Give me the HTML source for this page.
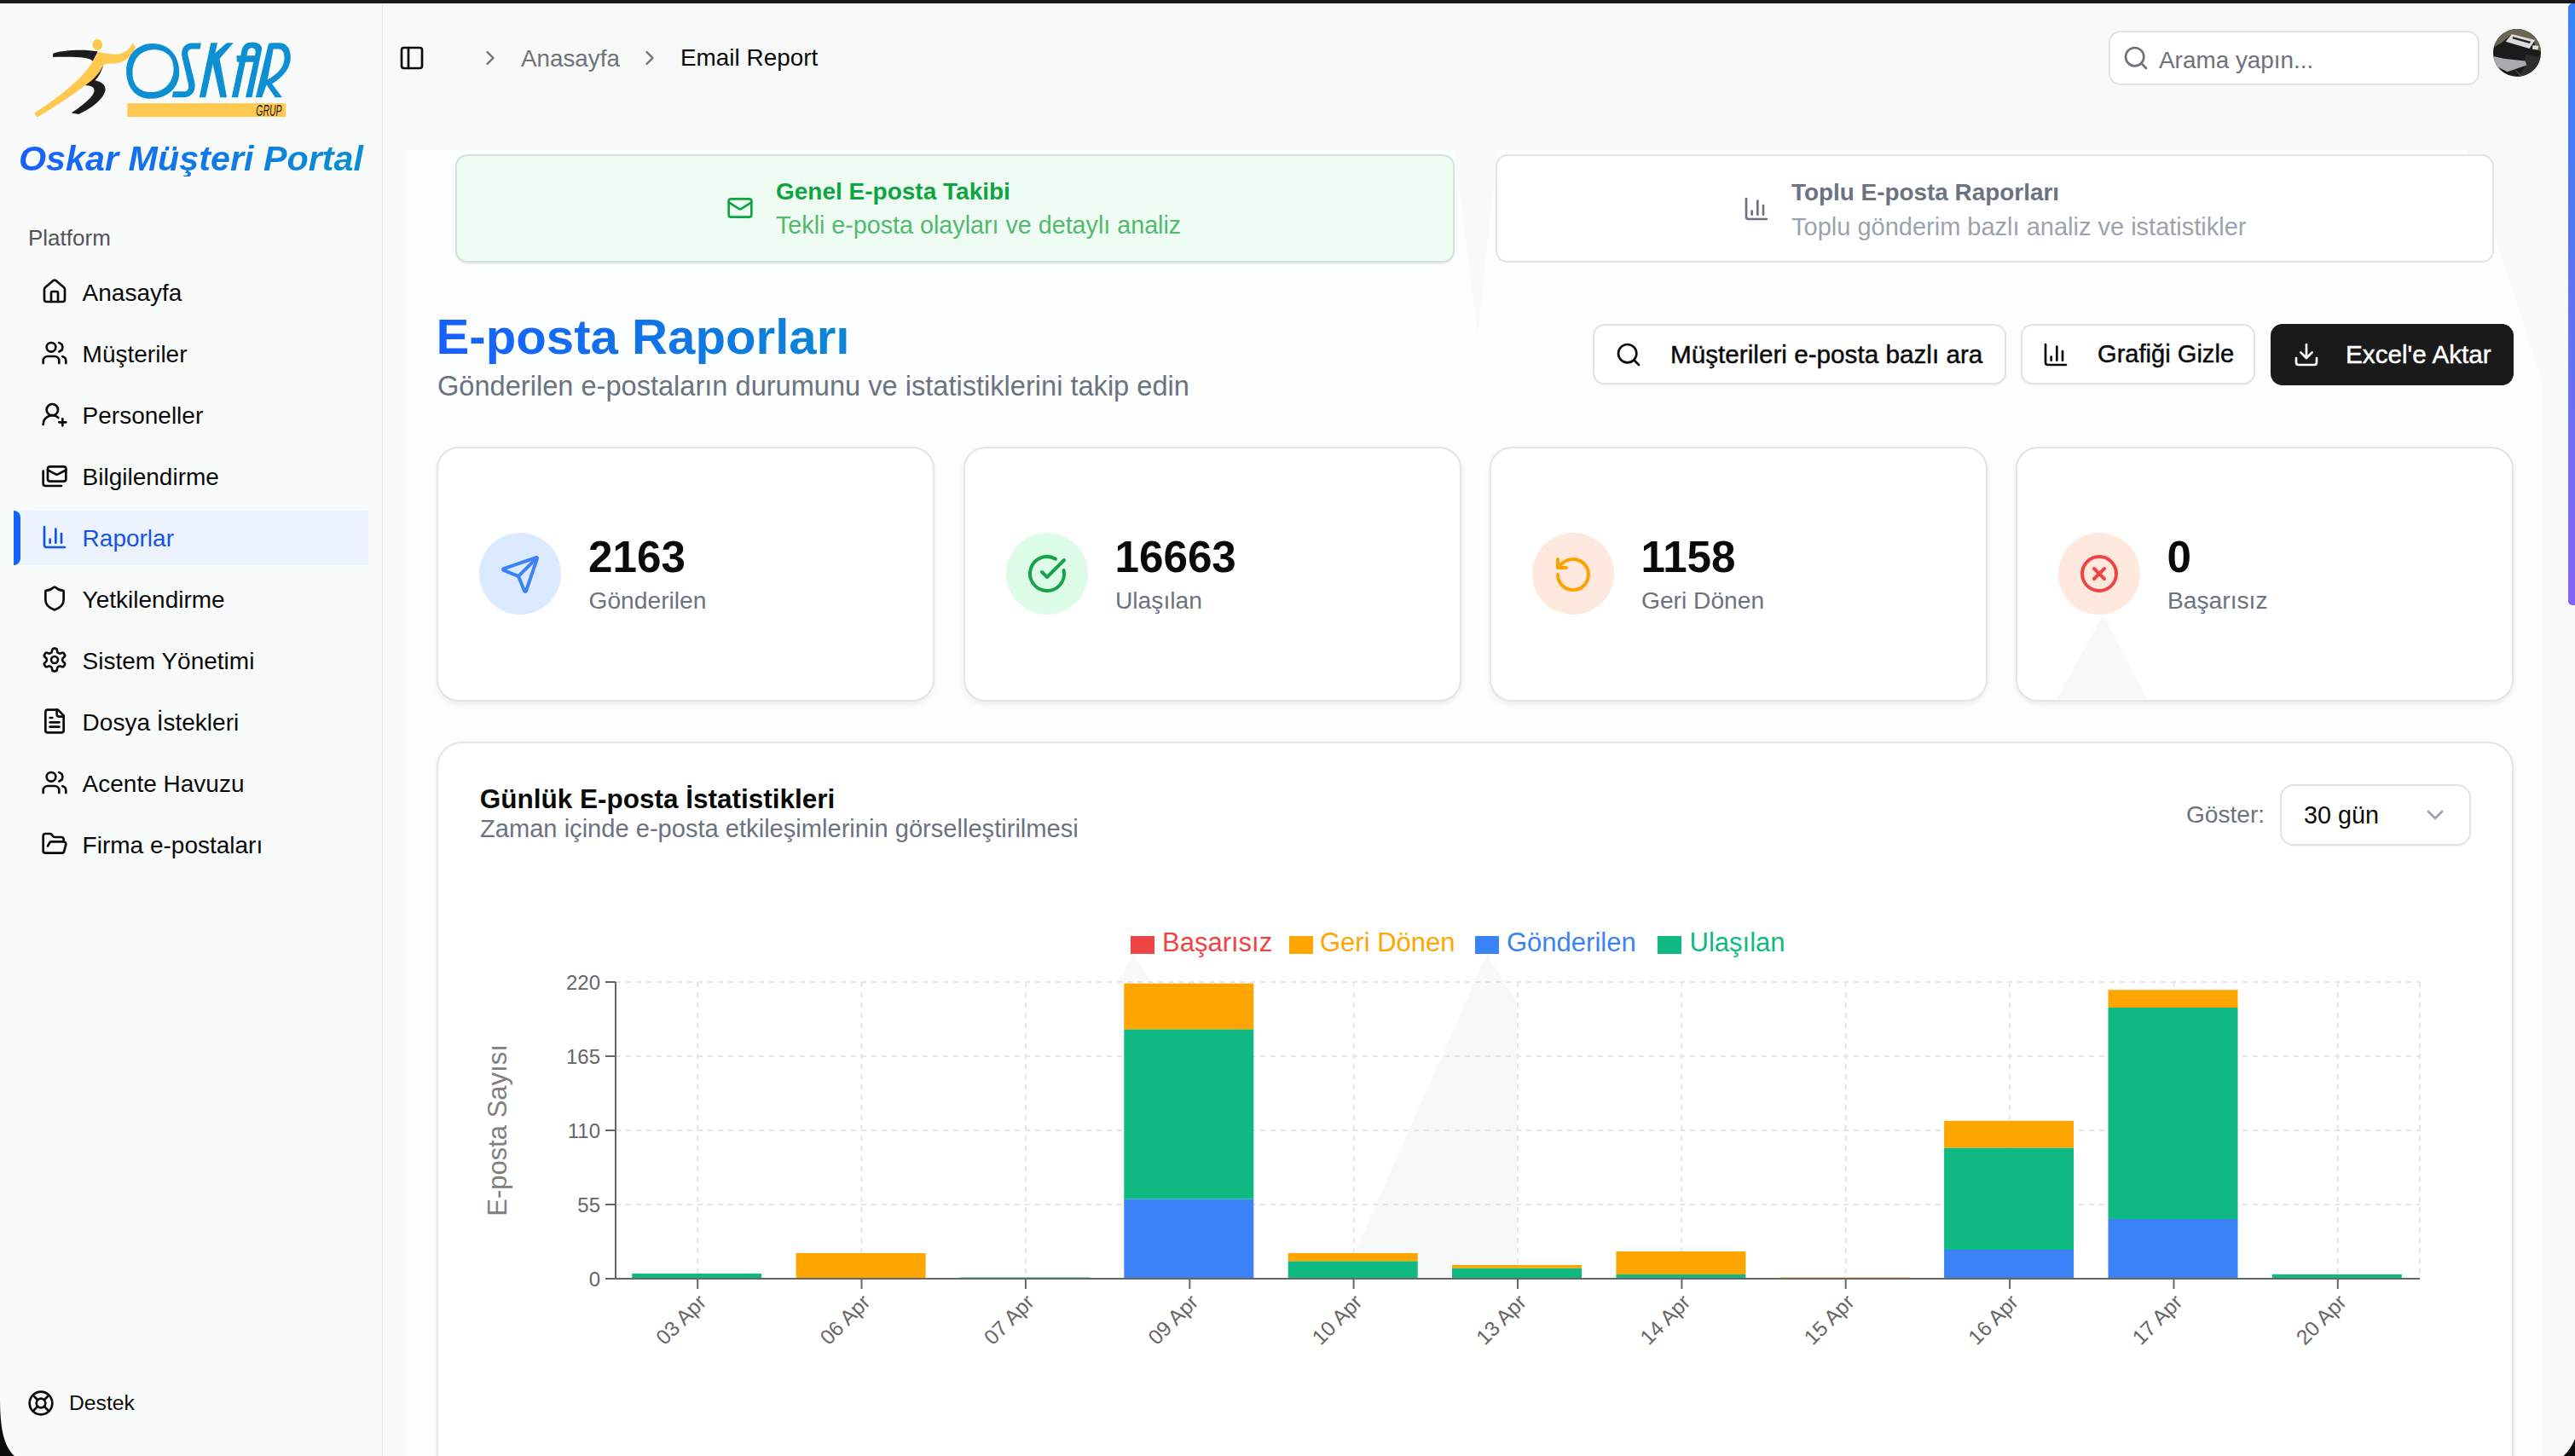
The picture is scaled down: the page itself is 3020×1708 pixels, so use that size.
<!DOCTYPE html>
<html><head><meta charset="utf-8">
<style>
*{box-sizing:border-box;margin:0;padding:0}
html,body{width:3020px;height:1708px;overflow:hidden;background:#f8fafa;font-family:"Liberation Sans",sans-serif;position:relative}
.t{position:absolute;white-space:nowrap;line-height:1}
.ic{position:absolute;overflow:visible}
.box{position:absolute}
</style></head><body>

<div class="box" style="left:0;top:0;width:3020px;height:4px;background:#1a1a1a"></div>
<div class="box" style="left:0;top:4px;width:3020px;height:1px;background:#fff"></div>
<svg class="ic" style="left:0;top:0;width:3020px;height:1708px" viewBox="0 0 3020 1708"><path d="M476 176 L1706 176 L1733 392 L1756 176 L2893 176 L2981 446 L2981 1708 L476 1708 Z" fill="#fcfdfd"/></svg>
<div class="box" style="left:0;top:5px;width:449px;height:1703px;background:#f9fafa;border-right:1px solid #e6e7e7"></div>
<svg class="ic" style="left:30px;top:35px;width:320px;height:110px" viewBox="0 0 2575 885">
<g transform="translate(48.3,40.2) scale(0.5527)">
<path fill="#1c1c1c" d="M380 330 C600 262 950 262 1145 300 L1060 462 C1000 392 800 385 380 392 Z"/>
<path fill="#1c1c1c" d="M1250 500 C1220 620 1170 720 1100 790 C1200 815 1275 860 1275 940 C1275 1080 1050 1270 820 1368 L695 1345 C900 1210 1085 1060 1085 960 C1085 900 1020 878 930 874 L1000 700 Z"/>
<path fill="#ffc94f" d="M60 1350 C400 1130 800 830 1000 560 C1060 470 1110 380 1150 305 C1250 320 1350 345 1480 350 L1480 500 C1380 510 1300 505 1250 520 C1150 720 1000 830 930 872 C700 1050 400 1250 110 1420 Z"/>
<ellipse fill="#ffc94f" cx="1140" cy="180" rx="85" ry="95"/>
</g>
<path fill="#ffc94f" d="M850 232 C920 228 985 190 1010 122 L1038 160 C1010 250 930 305 850 318 Z"/>
<g transform="translate(-241.41,-281.645) scale(8.047)"><g transform="translate(140,40) scale(0.08157)">
<g fill="#0d8fd3">
<path fill-rule="evenodd" d="M480 135 C720 135 862 320 862 545 C862 770 690 930 450 930 C230 930 100 760 100 530 C100 300 260 135 480 135 Z M500 225 C300 225 190 370 190 560 C190 730 290 835 460 835 C650 835 780 690 780 500 C780 330 670 225 500 225 Z"/>
<path d="M1175 130 L1160 215 L1045 215 C990 215 975 260 990 320 L1080 680 C1110 820 1040 910 920 910 L760 910 L772 825 L925 825 C985 825 1005 780 990 710 L905 350 C870 215 940 130 1050 130 Z"/>
<path d="M1315 125 L1410 125 L1240 910 L1150 910 Z"/>
<path d="M1345 300 L1545 125 L1640 125 L1440 355 L1330 400 Z"/>
<path d="M1335 395 L1440 350 L1545 910 L1450 910 Z"/>
<path fill-rule="evenodd" d="M1615 910 L1760 230 C1780 150 1830 115 1910 115 C2000 115 2062 160 2047 230 L1905 910 L1815 910 L1955 280 C1965 230 1945 200 1905 200 C1870 200 1850 220 1840 270 L1705 910 Z"/>
<path d="M1685 310 L1985 310 L1968 400 L1690 400 Z"/>
<path fill-rule="evenodd" d="M1960 910 L2140 155 C2145 135 2165 125 2195 125 L2290 125 C2400 125 2462 200 2462 330 C2462 490 2360 610 2195 715 L2340 910 L2240 910 L2115 730 L2050 910 Z M2215 215 L2285 215 C2345 215 2372 265 2372 340 C2372 460 2300 560 2130 655 Z"/>
</g>
<rect x="115" y="995" width="2280" height="195" fill="#ffc94f"/>
<text x="1965" y="1175" font-family="Liberation Sans" font-style="italic" font-size="222" fill="#1a1a1a" textLength="370" lengthAdjust="spacingAndGlyphs">GRUP</text>
</g></g>
</svg>

<div class="t" style="left:22px;top:166.0px;font-size:41.3px;color:transparent;font-weight:bold;font-style:italic;background:linear-gradient(90deg,#1760ff,#0a8fd0);-webkit-background-clip:text;background-clip:text;padding-right:4px">Oskar Müşteri Portal</div>
<div class="t" style="left:33px;top:266.2px;font-size:26px;color:#52525b;font-weight:normal">Platform</div>
<div class="box" style="left:16px;top:599px;width:416px;height:64px;background:#edf3fe;border-radius:0"></div>
<div class="box" style="left:16px;top:599px;width:8px;height:64px;background:#1562f8;border-radius:0 8px 8px 0"></div>
<svg class="ic" style="left:48px;top:326px;width:32px;height:32px" viewBox="0 0 24 24" fill="none" stroke="#0a0a0a" stroke-width="2" stroke-linecap="round" stroke-linejoin="round"><path d="M15 21v-8a1 1 0 0 0-1-1h-4a1 1 0 0 0-1 1v8"/><path d="M3 10a2 2 0 0 1 .709-1.528l7-5.999a2 2 0 0 1 2.582 0l7 5.999A2 2 0 0 1 21 10v9a2 2 0 0 1-2 2H5a2 2 0 0 1-2-2z"/></svg>
<div class="t" style="left:96.6px;top:330.1px;font-size:28px;color:#0a0a0a;font-weight:normal">Anasayfa</div>
<svg class="ic" style="left:48px;top:398px;width:32px;height:32px" viewBox="0 0 24 24" fill="none" stroke="#0a0a0a" stroke-width="2" stroke-linecap="round" stroke-linejoin="round"><path d="M16 21v-2a4 4 0 0 0-4-4H6a4 4 0 0 0-4 4v2"/><circle cx="9" cy="7" r="4"/><path d="M22 21v-2a4 4 0 0 0-3-3.87"/><path d="M16 3.13a4 4 0 0 1 0 7.75"/></svg>
<div class="t" style="left:96.6px;top:402.1px;font-size:28px;color:#0a0a0a;font-weight:normal">Müşteriler</div>
<svg class="ic" style="left:48px;top:470px;width:32px;height:32px" viewBox="0 0 24 24" fill="none" stroke="#0a0a0a" stroke-width="2" stroke-linecap="round" stroke-linejoin="round"><path d="M2 21a8 8 0 0 1 13.292-6"/><circle cx="10" cy="8" r="5"/><path d="M19 16v6"/><path d="M22 19h-6"/></svg>
<div class="t" style="left:96.6px;top:474.1px;font-size:28px;color:#0a0a0a;font-weight:normal">Personeller</div>
<svg class="ic" style="left:48px;top:542px;width:32px;height:32px" viewBox="0 0 24 24" fill="none" stroke="#0a0a0a" stroke-width="2" stroke-linecap="round" stroke-linejoin="round"><rect width="16" height="13" x="6" y="4" rx="2"/><path d="m22 7-7.1 3.78c-.57.3-1.23.3-1.8 0L6 7"/><path d="M2 8v11c0 1.1.9 2 2 2h14"/></svg>
<div class="t" style="left:96.6px;top:546.1px;font-size:28px;color:#0a0a0a;font-weight:normal">Bilgilendirme</div>
<svg class="ic" style="left:48px;top:614px;width:32px;height:32px" viewBox="0 0 24 24" fill="none" stroke="#1552e8" stroke-width="2" stroke-linecap="round" stroke-linejoin="round"><path d="M3 3v16a2 2 0 0 0 2 2h16"/><path d="M18 17V9"/><path d="M13 17V5"/><path d="M8 17v-3"/></svg>
<div class="t" style="left:96.6px;top:618.1px;font-size:28px;color:#1552e8;font-weight:normal">Raporlar</div>
<svg class="ic" style="left:48px;top:686px;width:32px;height:32px" viewBox="0 0 24 24" fill="none" stroke="#0a0a0a" stroke-width="2" stroke-linecap="round" stroke-linejoin="round"><path d="M20 13c0 5-3.5 7.5-7.66 8.95a1 1 0 0 1-.67-.01C7.5 20.5 4 18 4 13V6a1 1 0 0 1 1-1c2 0 4.5-1.2 6.24-2.72a1.17 1.17 0 0 1 1.52 0C14.51 3.81 17 5 19 5a1 1 0 0 1 1 1z"/></svg>
<div class="t" style="left:96.6px;top:690.1px;font-size:28px;color:#0a0a0a;font-weight:normal">Yetkilendirme</div>
<svg class="ic" style="left:48px;top:758px;width:32px;height:32px" viewBox="0 0 24 24" fill="none" stroke="#0a0a0a" stroke-width="2" stroke-linecap="round" stroke-linejoin="round"><path d="M12.22 2h-.44a2 2 0 0 0-2 2v.18a2 2 0 0 1-1 1.73l-.43.25a2 2 0 0 1-2 0l-.15-.08a2 2 0 0 0-2.73.73l-.22.38a2 2 0 0 0 .73 2.73l.15.1a2 2 0 0 1 1 1.72v.51a2 2 0 0 1-1 1.74l-.15.09a2 2 0 0 0-.73 2.73l.22.38a2 2 0 0 0 2.73.73l.15-.08a2 2 0 0 1 2 0l.43.25a2 2 0 0 1 1 1.73V20a2 2 0 0 0 2 2h.44a2 2 0 0 0 2-2v-.18a2 2 0 0 1 1-1.73l.43-.25a2 2 0 0 1 2 0l.15.08a2 2 0 0 0 2.73-.73l.22-.39a2 2 0 0 0-.73-2.73l-.15-.08a2 2 0 0 1-1-1.74v-.5a2 2 0 0 1 1-1.74l.15-.09a2 2 0 0 0 .73-2.73l-.22-.38a2 2 0 0 0-2.73-.73l-.15.08a2 2 0 0 1-2 0l-.43-.25a2 2 0 0 1-1-1.73V4a2 2 0 0 0-2-2z"/><circle cx="12" cy="12" r="3"/></svg>
<div class="t" style="left:96.6px;top:762.1px;font-size:28px;color:#0a0a0a;font-weight:normal">Sistem Yönetimi</div>
<svg class="ic" style="left:48px;top:830px;width:32px;height:32px" viewBox="0 0 24 24" fill="none" stroke="#0a0a0a" stroke-width="2" stroke-linecap="round" stroke-linejoin="round"><path d="M15 2H6a2 2 0 0 0-2 2v16a2 2 0 0 0 2 2h12a2 2 0 0 0 2-2V7Z"/><path d="M14 2v4a2 2 0 0 0 2 2h4"/><path d="M10 9H8"/><path d="M16 13H8"/><path d="M16 17H8"/></svg>
<div class="t" style="left:96.6px;top:834.1px;font-size:28px;color:#0a0a0a;font-weight:normal">Dosya İstekleri</div>
<svg class="ic" style="left:48px;top:902px;width:32px;height:32px" viewBox="0 0 24 24" fill="none" stroke="#0a0a0a" stroke-width="2" stroke-linecap="round" stroke-linejoin="round"><path d="M16 21v-2a4 4 0 0 0-4-4H6a4 4 0 0 0-4 4v2"/><circle cx="9" cy="7" r="4"/><path d="M22 21v-2a4 4 0 0 0-3-3.87"/><path d="M16 3.13a4 4 0 0 1 0 7.75"/></svg>
<div class="t" style="left:96.6px;top:906.1px;font-size:28px;color:#0a0a0a;font-weight:normal">Acente Havuzu</div>
<svg class="ic" style="left:48px;top:974px;width:32px;height:32px" viewBox="0 0 24 24" fill="none" stroke="#0a0a0a" stroke-width="2" stroke-linecap="round" stroke-linejoin="round"><path d="m6 14 1.5-2.9A2 2 0 0 1 9.24 10H20a2 2 0 0 1 1.94 2.5l-1.54 6a2 2 0 0 1-1.95 1.5H4a2 2 0 0 1-2-2V5a2 2 0 0 1 2-2h3.9a2 2 0 0 1 1.69.9l.81 1.2a2 2 0 0 0 1.67.9H18a2 2 0 0 1 2 2v2"/></svg>
<div class="t" style="left:96.6px;top:978.1px;font-size:28px;color:#0a0a0a;font-weight:normal">Firma e-postaları</div>
<svg class="ic" style="left:31.5px;top:1629.7px;width:32px;height:32px" viewBox="0 0 24 24" fill="none" stroke="#0a0a0a" stroke-width="2" stroke-linecap="round" stroke-linejoin="round"><circle cx="12" cy="12" r="10"/><path d="m4.93 4.93 4.24 4.24"/><path d="m14.83 9.17 4.24-4.24"/><path d="m14.83 14.83 4.24 4.24"/><path d="m9.17 14.83-4.24 4.24"/><circle cx="12" cy="12" r="4"/></svg>
<div class="t" style="left:81px;top:1634.1px;font-size:24.7px;color:#0a0a0a;font-weight:normal">Destek</div>
<svg class="ic" style="left:467.3px;top:52.3px;width:32px;height:32px" viewBox="0 0 24 24" fill="none" stroke="#0a0a0a" stroke-width="2" stroke-linecap="round" stroke-linejoin="round"><rect width="18" height="18" x="3" y="3" rx="2"/><path d="M9 3v18"/></svg>
<svg class="ic" style="left:561px;top:54px;width:28px;height:28px" viewBox="0 0 24 24" fill="none" stroke="#71717a" stroke-width="2" stroke-linecap="round" stroke-linejoin="round"><path d="m9 18 6-6-6-6"/></svg>
<div class="t" style="left:611px;top:54.5px;font-size:27.8px;color:#71717a;font-weight:normal">Anasayfa</div>
<svg class="ic" style="left:748px;top:54px;width:28px;height:28px" viewBox="0 0 24 24" fill="none" stroke="#71717a" stroke-width="2" stroke-linecap="round" stroke-linejoin="round"><path d="m9 18 6-6-6-6"/></svg>
<div class="t" style="left:798px;top:54.4px;font-size:27.9px;color:#0a0a0a;font-weight:normal">Email Report</div>
<div class="box" style="left:2473px;top:36px;width:435px;height:64px;background:#fff;border:2px solid #e4e4e7;border-radius:14px"></div>
<svg class="ic" style="left:2489.3px;top:52.3px;width:32px;height:32px" viewBox="0 0 24 24" fill="none" stroke="#71717a" stroke-width="2" stroke-linecap="round" stroke-linejoin="round"><circle cx="11" cy="11" r="8"/><path d="m21 21-4.3-4.3"/></svg>
<div class="t" style="left:2532px;top:56.7px;font-size:27.9px;color:#71717a;font-weight:normal">Arama yapın...</div>
<svg class="ic" style="left:2924px;top:34px;width:56px;height:56px" viewBox="0 0 56 56">
<defs><clipPath id="av"><circle cx="28" cy="28" r="28"/></clipPath></defs>
<g clip-path="url(#av)">
<rect width="56" height="56" fill="#1b1b1b"/>
<path d="M0 0 H56 V26 L50 24 L48 14 L22 6 L10 16 L0 22 Z" fill="#6a6456"/>
<path d="M14.7 14.7 L21.9 6 L49.2 13.1 L42.5 22.9 Z" fill="#dcdcdc"/>
<path d="M22.9 9 L44 14.7 L43 17 L22.9 11.5 Z" fill="#222"/>
<path d="M46.6 19 L53.3 20 L52 24.5 L46 23.5 Z" fill="#e0e0e0"/>
<path d="M38 30 L56 33 L56 56 L30 56 L36 46 Z" fill="#2e2e2e"/>
<path d="M0 32 L12.6 34.8 L37.4 37.4 L39.4 42.5 L16.7 50.2 L4.4 44 L0 40 Z" fill="#a9a9ae"/>
<path d="M26 48.2 L32.7 54.9" stroke="#9a8050" stroke-width="0.8"/>
</g></svg>
<div class="box" style="left:3012px;top:4px;width:8px;height:706px;background:linear-gradient(180deg,#3b82f6,#8364f5);border-radius:5px 0 0 5px"></div>
<div class="box" style="left:534px;top:181px;width:1172px;height:127px;background:#effcf3;border:2px solid #d5e2db;border-radius:14px;box-shadow:0 2px 2px rgba(0,0,0,.07)"></div>
<svg class="ic" style="left:851.7px;top:228px;width:32px;height:32px" viewBox="0 0 24 24" fill="none" stroke="#0da540" stroke-width="2" stroke-linecap="round" stroke-linejoin="round"><rect width="20" height="16" x="2" y="4" rx="2"/><path d="m22 7-8.97 5.7a1.94 1.94 0 0 1-2.06 0L2 7"/></svg>
<div class="t" style="left:910px;top:211.3px;font-size:28px;color:#0da540;font-weight:bold">Genel E-posta Takibi</div>
<div class="t" style="left:910px;top:249.7px;font-size:28.7px;color:#52b96f;font-weight:normal">Tekli e-posta olayları ve detaylı analiz</div>
<div class="box" style="left:1754px;top:181px;width:1171px;height:127px;background:#fff;border:2px solid #e4e4e6;border-radius:14px"></div>
<svg class="ic" style="left:2044px;top:229px;width:32px;height:32px" viewBox="0 0 24 24" fill="none" stroke="#6b7280" stroke-width="2" stroke-linecap="round" stroke-linejoin="round"><path d="M3 3v16a2 2 0 0 0 2 2h16"/><path d="M18 17V9"/><path d="M13 17V5"/><path d="M8 17v-3"/></svg>
<div class="t" style="left:2101px;top:212.4px;font-size:27.9px;color:#6b7280;font-weight:bold">Toplu E-posta Raporları</div>
<div class="t" style="left:2101px;top:251.5px;font-size:29px;color:#9ca3af;font-weight:normal">Toplu gönderim bazlı analiz ve istatistikler</div>
<div class="t" style="left:511.5px;top:365.7px;font-size:58.2px;color:transparent;font-weight:bold;background:linear-gradient(90deg,#1760ff,#0a86d4);-webkit-background-clip:text;background-clip:text;padding-bottom:10px">E-posta Raporları</div>
<div class="t" style="left:513px;top:436.9px;font-size:32.6px;color:#6b7280;font-weight:normal">Gönderilen e-postaların durumunu ve istatistiklerini takip edin</div>
<div class="box" style="left:1868px;top:380px;width:485px;height:71px;background:#fff;border:2px solid #e4e4e7;border-radius:14px;box-shadow:0 1px 2px rgba(0,0,0,.06)"></div>
<svg class="ic" style="left:1894.3px;top:400.3px;width:32px;height:32px" viewBox="0 0 24 24" fill="none" stroke="#0a0a0a" stroke-width="2" stroke-linecap="round" stroke-linejoin="round"><circle cx="11" cy="11" r="8"/><path d="m21 21-4.3-4.3"/></svg>
<div class="t" style="left:1959px;top:400.9px;font-size:29.7px;color:#0a0a0a;font-weight:normal;-webkit-text-stroke:0.45px #0a0a0a">Müşterileri e-posta bazlı ara</div>
<div class="box" style="left:2370px;top:380px;width:275px;height:71px;background:#fff;border:2px solid #e4e4e7;border-radius:14px;box-shadow:0 1px 2px rgba(0,0,0,.06)"></div>
<svg class="ic" style="left:2395.3px;top:400.3px;width:32px;height:32px" viewBox="0 0 24 24" fill="none" stroke="#0a0a0a" stroke-width="2" stroke-linecap="round" stroke-linejoin="round"><path d="M3 3v16a2 2 0 0 0 2 2h16"/><path d="M18 17V9"/><path d="M13 17V5"/><path d="M8 17v-3"/></svg>
<div class="t" style="left:2460px;top:401.4px;font-size:29.1px;color:#0a0a0a;font-weight:normal;-webkit-text-stroke:0.45px #0a0a0a">Grafiği Gizle</div>
<div class="box" style="left:2663px;top:380px;width:285px;height:72px;background:#1a1a1a;border-radius:14px"></div>
<svg class="ic" style="left:2688.5px;top:400.3px;width:32px;height:32px" viewBox="0 0 24 24" fill="none" stroke="#fff" stroke-width="2" stroke-linecap="round" stroke-linejoin="round"><path d="M21 15v4a2 2 0 0 1-2 2H5a2 2 0 0 1-2-2v-4"/><polyline points="7 10 12 15 17 10"/><line x1="12" x2="12" y1="15" y2="3"/></svg>
<div class="t" style="left:2751px;top:400.9px;font-size:29.7px;color:#fff;font-weight:normal;-webkit-text-stroke:0.45px #fff">Excel'e Aktar</div>
<div class="box" style="left:512px;top:524px;width:584px;height:298.5px;background:#fff;border:2px solid #e5e5e7;border-radius:26px;box-shadow:0 3px 6px rgba(0,0,0,.07)"></div>
<div class="box" style="left:562px;top:625px;width:96px;height:96px;background:#dbeafe;border-radius:50%"></div>
<svg class="ic" style="left:585.7px;top:650px;width:48px;height:48px" viewBox="0 0 24 24" fill="none" stroke="#3b82f6" stroke-width="2" stroke-linecap="round" stroke-linejoin="round"><path d="M14.536 21.686a.5.5 0 0 0 .937-.024l6.5-19a.496.496 0 0 0-.635-.635l-19 6.5a.5.5 0 0 0-.024.937l7.93 3.18a2 2 0 0 1 1.112 1.11z"/><path d="m21.854 2.147-10.94 10.939"/></svg>
<div class="t" style="left:690px;top:627.7px;font-size:51.2px;color:#0a0a0a;font-weight:bold">2163</div>
<div class="t" style="left:690.5px;top:690.1px;font-size:28.2px;color:#6b7280;font-weight:normal">Gönderilen</div>
<div class="box" style="left:1129.5px;top:524px;width:584px;height:298.5px;background:#fff;border:2px solid #e5e5e7;border-radius:26px;box-shadow:0 3px 6px rgba(0,0,0,.07)"></div>
<div class="box" style="left:1179.5px;top:625px;width:96px;height:96px;background:#dcfce7;border-radius:50%"></div>
<svg class="ic" style="left:1204.0px;top:649px;width:48px;height:48px" viewBox="0 0 24 24" fill="none" stroke="#16a34a" stroke-width="2" stroke-linecap="round" stroke-linejoin="round"><path d="M21.801 10A10 10 0 1 1 17 3.335"/><path d="m9 11 3 3L22 4"/></svg>
<div class="t" style="left:1307.5px;top:627.7px;font-size:51.2px;color:#0a0a0a;font-weight:bold">16663</div>
<div class="t" style="left:1308.0px;top:690.1px;font-size:28.2px;color:#6b7280;font-weight:normal">Ulaşılan</div>
<div class="box" style="left:1746.5px;top:524px;width:584px;height:298.5px;background:#fff;border:2px solid #e5e5e7;border-radius:26px;box-shadow:0 3px 6px rgba(0,0,0,.07)"></div>
<div class="box" style="left:1796.5px;top:625px;width:96px;height:96px;background:#ffe9de;border-radius:50%"></div>
<svg class="ic" style="left:1821.0px;top:650px;width:48px;height:48px" viewBox="0 0 24 24" fill="none" stroke="#ffa200" stroke-width="2" stroke-linecap="round" stroke-linejoin="round"><path d="M3 12a9 9 0 1 0 9-9 9.75 9.75 0 0 0-6.74 2.74L3 8"/><path d="M3 3v5h5"/></svg>
<div class="t" style="left:1924.5px;top:627.7px;font-size:51.2px;color:#0a0a0a;font-weight:bold">1158</div>
<div class="t" style="left:1925.0px;top:690.1px;font-size:28.2px;color:#6b7280;font-weight:normal">Geri Dönen</div>
<div class="box" style="left:2363.5px;top:524px;width:584px;height:298.5px;background:#fff;border:2px solid #e5e5e7;border-radius:26px;box-shadow:0 3px 6px rgba(0,0,0,.07)"></div>
<svg class="ic" style="left:0;top:0;width:3020px;height:1708px" viewBox="0 0 3020 1708"><path d="M2466.5 721 L2518.4 820 L2412 820 Z" fill="#f7f9f9"/></svg>
<div class="box" style="left:2413.5px;top:625px;width:96px;height:96px;background:#ffe9de;border-radius:50%"></div>
<svg class="ic" style="left:2438.0px;top:649px;width:48px;height:48px" viewBox="0 0 24 24" fill="none" stroke="#ef4444" stroke-width="2" stroke-linecap="round" stroke-linejoin="round"><circle cx="12" cy="12" r="10"/><path d="m15 9-6 6"/><path d="m9 9 6 6"/></svg>
<div class="t" style="left:2541.5px;top:627.7px;font-size:51.2px;color:#0a0a0a;font-weight:bold">0</div>
<div class="t" style="left:2542.0px;top:690.1px;font-size:28.2px;color:#6b7280;font-weight:normal">Başarısız</div>
<div class="box" style="left:512px;top:870px;width:2436px;height:900px;background:#fff;border:2px solid #e5e5e7;border-radius:30px;box-shadow:0 3px 6px rgba(0,0,0,.07)"></div>
<div class="t" style="left:562.7px;top:922.3px;font-size:31.5px;color:#0a0a0a;font-weight:bold">Günlük E-posta İstatistikleri</div>
<div class="t" style="left:563px;top:958.1px;font-size:29.1px;color:#6b7280;font-weight:normal">Zaman içinde e-posta etkileşimlerinin görselleştirilmesi</div>
<div class="t" style="left:2564px;top:942.2px;font-size:28.1px;color:#6b7280;font-weight:normal">Göster:</div>
<div class="box" style="left:2674px;top:920px;width:224px;height:72px;background:#fff;border:2px solid #e4e4e7;border-radius:16px;box-shadow:0 1px 2px rgba(0,0,0,.05)"></div>
<div class="t" style="left:2702px;top:941.6px;font-size:28.8px;color:#0a0a0a;font-weight:normal">30 gün</div>
<svg class="ic" style="left:2839.5px;top:940px;width:32px;height:32px" viewBox="0 0 24 24" fill="none" stroke="#a1a1aa" stroke-width="2" stroke-linecap="round" stroke-linejoin="round"><path d="m6 9 6 6 6-6"/></svg>
<svg class="ic" style="left:0;top:0;width:3020px;height:1708px" viewBox="0 0 3020 1708">
<path d="M1743.8 1118.4 L1779.8 1177.5 L1779.8 1500 L1575.4 1500 Z" fill="#f7f9f9"/>
<path d="M1329 1119 L1311 1152 L1350 1152 Z" fill="#f7f9f9"/>
<line x1="722" y1="1152" x2="2838" y2="1152" stroke="#e5e5e5" stroke-width="2" stroke-dasharray="6 6"/>
<line x1="722" y1="1239" x2="2838" y2="1239" stroke="#e5e5e5" stroke-width="2" stroke-dasharray="6 6"/>
<line x1="722" y1="1326" x2="2838" y2="1326" stroke="#e5e5e5" stroke-width="2" stroke-dasharray="6 6"/>
<line x1="722" y1="1413" x2="2838" y2="1413" stroke="#e5e5e5" stroke-width="2" stroke-dasharray="6 6"/>
<line x1="818.2" y1="1152" x2="818.2" y2="1500" stroke="#e5e5e5" stroke-width="2" stroke-dasharray="6 6"/>
<line x1="1010.5" y1="1152" x2="1010.5" y2="1500" stroke="#e5e5e5" stroke-width="2" stroke-dasharray="6 6"/>
<line x1="1202.9" y1="1152" x2="1202.9" y2="1500" stroke="#e5e5e5" stroke-width="2" stroke-dasharray="6 6"/>
<line x1="1395.3" y1="1152" x2="1395.3" y2="1500" stroke="#e5e5e5" stroke-width="2" stroke-dasharray="6 6"/>
<line x1="1587.6" y1="1152" x2="1587.6" y2="1500" stroke="#e5e5e5" stroke-width="2" stroke-dasharray="6 6"/>
<line x1="1780.0" y1="1152" x2="1780.0" y2="1500" stroke="#e5e5e5" stroke-width="2" stroke-dasharray="6 6"/>
<line x1="1972.4" y1="1152" x2="1972.4" y2="1500" stroke="#e5e5e5" stroke-width="2" stroke-dasharray="6 6"/>
<line x1="2164.7" y1="1152" x2="2164.7" y2="1500" stroke="#e5e5e5" stroke-width="2" stroke-dasharray="6 6"/>
<line x1="2357.1" y1="1152" x2="2357.1" y2="1500" stroke="#e5e5e5" stroke-width="2" stroke-dasharray="6 6"/>
<line x1="2549.5" y1="1152" x2="2549.5" y2="1500" stroke="#e5e5e5" stroke-width="2" stroke-dasharray="6 6"/>
<line x1="2741.8" y1="1152" x2="2741.8" y2="1500" stroke="#e5e5e5" stroke-width="2" stroke-dasharray="6 6"/>
<line x1="2838" y1="1152" x2="2838" y2="1500" stroke="#e5e5e5" stroke-width="2" stroke-dasharray="6 6"/>
<rect x="741.2" y="1494" width="152" height="6.0" fill="#10b981"/>
<rect x="933.6" y="1470" width="152" height="30.0" fill="#ffa500"/>
<rect x="1125.9" y="1498.5" width="152" height="1.5" fill="#10b981"/>
<rect x="1318.3" y="1406.7" width="152" height="93.3" fill="#3b82f6"/>
<rect x="1318.3" y="1207.3" width="152" height="199.4" fill="#10b981"/>
<rect x="1318.3" y="1153.6" width="152" height="53.7" fill="#ffa500"/>
<rect x="1510.7" y="1479.3" width="152" height="20.7" fill="#10b981"/>
<rect x="1510.7" y="1470" width="152" height="9.3" fill="#ffa500"/>
<rect x="1703.0" y="1487.5" width="152" height="12.5" fill="#10b981"/>
<rect x="1703.0" y="1483.9" width="152" height="3.6" fill="#ffa500"/>
<rect x="1895.4" y="1495" width="152" height="5.0" fill="#10b981"/>
<rect x="1895.4" y="1468" width="152" height="27.0" fill="#ffa500"/>
<rect x="2087.7" y="1498.5" width="152" height="1.5" fill="#ffa500"/>
<rect x="2280.1" y="1466" width="152" height="34.0" fill="#3b82f6"/>
<rect x="2280.1" y="1346.4" width="152" height="119.6" fill="#10b981"/>
<rect x="2280.1" y="1314.8" width="152" height="31.6" fill="#ffa500"/>
<rect x="2472.5" y="1430" width="152" height="70.0" fill="#3b82f6"/>
<rect x="2472.5" y="1182" width="152" height="248.0" fill="#10b981"/>
<rect x="2472.5" y="1161.2" width="152" height="20.8" fill="#ffa500"/>
<rect x="2664.8" y="1494.9" width="152" height="5.1" fill="#10b981"/>
<line x1="722" y1="1152" x2="722" y2="1501" stroke="#666" stroke-width="2"/>
<line x1="721" y1="1500" x2="2838" y2="1500" stroke="#666" stroke-width="2"/>
<line x1="710" y1="1152" x2="722" y2="1152" stroke="#666" stroke-width="2"/>
<text x="704" y="1160.5" text-anchor="end" font-family="Liberation Sans" font-size="24" fill="#666">220</text>
<line x1="710" y1="1239" x2="722" y2="1239" stroke="#666" stroke-width="2"/>
<text x="704" y="1247.5" text-anchor="end" font-family="Liberation Sans" font-size="24" fill="#666">165</text>
<line x1="710" y1="1326" x2="722" y2="1326" stroke="#666" stroke-width="2"/>
<text x="704" y="1334.5" text-anchor="end" font-family="Liberation Sans" font-size="24" fill="#666">110</text>
<line x1="710" y1="1413" x2="722" y2="1413" stroke="#666" stroke-width="2"/>
<text x="704" y="1421.5" text-anchor="end" font-family="Liberation Sans" font-size="24" fill="#666">55</text>
<line x1="710" y1="1500" x2="722" y2="1500" stroke="#666" stroke-width="2"/>
<text x="704" y="1508.5" text-anchor="end" font-family="Liberation Sans" font-size="24" fill="#666">0</text>
<line x1="818.2" y1="1500" x2="818.2" y2="1512" stroke="#666" stroke-width="2"/>
<text x="829.7" y="1529" text-anchor="end" transform="rotate(-45 829.7 1529)" font-family="Liberation Sans" font-size="24.5" fill="#666">03 Apr</text>
<line x1="1010.5" y1="1500" x2="1010.5" y2="1512" stroke="#666" stroke-width="2"/>
<text x="1022.0" y="1529" text-anchor="end" transform="rotate(-45 1022.0 1529)" font-family="Liberation Sans" font-size="24.5" fill="#666">06 Apr</text>
<line x1="1202.9" y1="1500" x2="1202.9" y2="1512" stroke="#666" stroke-width="2"/>
<text x="1214.4" y="1529" text-anchor="end" transform="rotate(-45 1214.4 1529)" font-family="Liberation Sans" font-size="24.5" fill="#666">07 Apr</text>
<line x1="1395.3" y1="1500" x2="1395.3" y2="1512" stroke="#666" stroke-width="2"/>
<text x="1406.8" y="1529" text-anchor="end" transform="rotate(-45 1406.8 1529)" font-family="Liberation Sans" font-size="24.5" fill="#666">09 Apr</text>
<line x1="1587.6" y1="1500" x2="1587.6" y2="1512" stroke="#666" stroke-width="2"/>
<text x="1599.1" y="1529" text-anchor="end" transform="rotate(-45 1599.1 1529)" font-family="Liberation Sans" font-size="24.5" fill="#666">10 Apr</text>
<line x1="1780.0" y1="1500" x2="1780.0" y2="1512" stroke="#666" stroke-width="2"/>
<text x="1791.5" y="1529" text-anchor="end" transform="rotate(-45 1791.5 1529)" font-family="Liberation Sans" font-size="24.5" fill="#666">13 Apr</text>
<line x1="1972.4" y1="1500" x2="1972.4" y2="1512" stroke="#666" stroke-width="2"/>
<text x="1983.9" y="1529" text-anchor="end" transform="rotate(-45 1983.9 1529)" font-family="Liberation Sans" font-size="24.5" fill="#666">14 Apr</text>
<line x1="2164.7" y1="1500" x2="2164.7" y2="1512" stroke="#666" stroke-width="2"/>
<text x="2176.2" y="1529" text-anchor="end" transform="rotate(-45 2176.2 1529)" font-family="Liberation Sans" font-size="24.5" fill="#666">15 Apr</text>
<line x1="2357.1" y1="1500" x2="2357.1" y2="1512" stroke="#666" stroke-width="2"/>
<text x="2368.6" y="1529" text-anchor="end" transform="rotate(-45 2368.6 1529)" font-family="Liberation Sans" font-size="24.5" fill="#666">16 Apr</text>
<line x1="2549.5" y1="1500" x2="2549.5" y2="1512" stroke="#666" stroke-width="2"/>
<text x="2561.0" y="1529" text-anchor="end" transform="rotate(-45 2561.0 1529)" font-family="Liberation Sans" font-size="24.5" fill="#666">17 Apr</text>
<line x1="2741.8" y1="1500" x2="2741.8" y2="1512" stroke="#666" stroke-width="2"/>
<text x="2753.3" y="1529" text-anchor="end" transform="rotate(-45 2753.3 1529)" font-family="Liberation Sans" font-size="24.5" fill="#666">20 Apr</text>
<text x="0" y="0" text-anchor="middle" transform="translate(594 1326) rotate(-90)" font-family="Liberation Sans" font-size="31" fill="#808080">E-posta Sayısı</text>
<rect x="1326" y="1098" width="28" height="21" fill="#ef4444"/>
<text x="1363" y="1116" font-family="Liberation Sans" font-size="31" fill="#ef4444">Başarısız</text>
<rect x="1512" y="1098" width="28" height="21" fill="#ffa500"/>
<text x="1548" y="1116" font-family="Liberation Sans" font-size="31" fill="#ffa500">Geri Dönen</text>
<rect x="1730" y="1098" width="28" height="21" fill="#3b82f6"/>
<text x="1767" y="1116" font-family="Liberation Sans" font-size="31" fill="#3b82f6">Gönderilen</text>
<rect x="1944" y="1098" width="28" height="21" fill="#10b981"/>
<text x="1981.5" y="1116" font-family="Liberation Sans" font-size="31" fill="#10b981">Ulaşılan</text>
</svg>
<svg class="ic" style="left:0;top:1600px;width:3020px;height:108px" viewBox="0 1600 3020 108"><path d="M0 1644 C0.5 1675 4 1696 17 1708 L0 1708 Z" fill="#0d0d0d"/><path d="M3020 1688 C3016 1697 3012 1703 3006.5 1708 L3020 1708 Z" fill="#0d0d0d"/></svg>
</body></html>
